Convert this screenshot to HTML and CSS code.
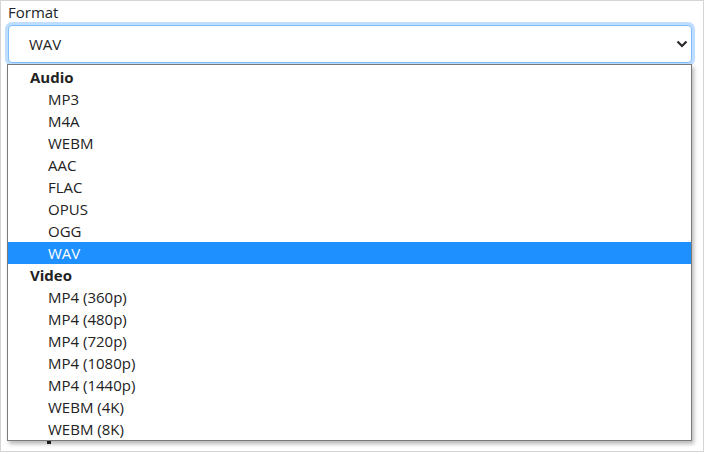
FILE: index.html
```html
<!DOCTYPE html>
<html>
<head>
<meta charset="utf-8">
<link rel="stylesheet" href="styles.css">
</head>
<body>
<div class="frame">
  <div class="label">Format</div>
  <div class="field">
    <div class="select">
      <span class="value">WAV</span>
      <svg class="chev" width="12" height="8" viewBox="0 0 12 8"><path d="M1.5 1.5 L6 6 L10.5 1.5" fill="none" stroke="#2b2b2b" stroke-width="2.2"/></svg>
    </div>
    <div class="popup">
      <div class="group">Audio</div>
      <div class="opt">MP3</div>
      <div class="opt">M4A</div>
      <div class="opt">WEBM</div>
      <div class="opt">AAC</div>
      <div class="opt">FLAC</div>
      <div class="opt">OPUS</div>
      <div class="opt">OGG</div>
      <div class="opt sel">WAV</div>
      <div class="group">Video</div>
      <div class="opt">MP4 (360p)</div>
      <div class="opt">MP4 (480p)</div>
      <div class="opt">MP4 (720p)</div>
      <div class="opt">MP4 (1080p)</div>
      <div class="opt">MP4 (1440p)</div>
      <div class="opt">WEBM (4K)</div>
      <div class="opt">WEBM (8K)</div>
    </div>
  </div>
  <div class="peek"></div>
</div>
</body>
</html>
```
FILE: styles.css
```css
html, body {
  margin: 0;
  padding: 0;
  background: #fff;
}
body {
  font-family: "Open Sans", "Noto Sans", sans-serif;
  font-size: 15px;
  color: #212529;
}
.frame {
  width: 704px;
  height: 452px;
  box-sizing: border-box;
  border: 1px solid #d4d4d4;
  padding: 0 11px 0 6px;
  overflow: hidden;
}
.label {
  line-height: 22px;
  height: 22px;
  padding-left: 1px;
}
.field {
  position: relative;
  margin-top: 2px;
}
.select {
  height: 38px;
  box-sizing: border-box;
  border: 1px solid #80bdff;
  border-radius: 4px;
  box-shadow: 0 0 0 3px rgba(0, 123, 255, 0.25);
  background: #fff;
  display: flex;
  align-items: center;
  justify-content: space-between;
  padding: 0 3px 0 20px;
  margin-left: 1px;
}
.value {
  line-height: 22px;
  color: #222;
}
.chev {
  display: block;
}
.popup {
  position: absolute;
  top: 39px;
  left: 0;
  right: 0;
  background: #fff;
  border: 1px solid #7a7a7a;
  padding: 1px 0 0;
  box-shadow: 2px 3px 4px rgba(0, 0, 0, 0.28);
  z-index: 2;
}
.group, .opt {
  height: 22px;
  line-height: 22px;
  color: #222;
  white-space: nowrap;
}
.group {
  padding-left: 22px;
  font-weight: 700;
}
.opt {
  padding-left: 40px;
}
.opt.sel {
  background: #1e90ff;
  color: #fff;
}
.peek {
  width: 4px;
  height: 6px;
  margin: 375px 0 0 40px;
  background: #222;
}
```
